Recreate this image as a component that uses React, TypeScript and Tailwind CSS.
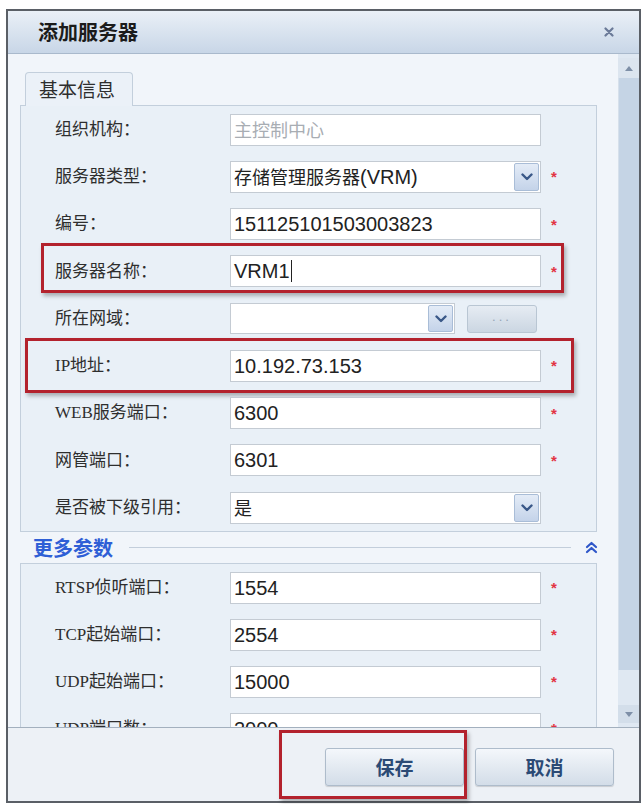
import React from "react";

const labelFont = "font-['Liberation_Serif','Noto_Sans_CJK_SC',serif]";
const valueFont = "font-['Liberation_Sans','Noto_Sans_CJK_SC',sans-serif]";
const cjkFont = "font-['Noto_Sans_CJK_SC',sans-serif]";

function ChevronDown() {
  return (
    <svg width="12" height="8" viewBox="0 0 12 8">
      <path d="M1.5 1.5 L6 6 L10.5 1.5" stroke="#3a5888" strokeWidth="2.4" fill="none" strokeLinecap="round" strokeLinejoin="round" />
    </svg>
  );
}

function Star() {
  return (
    <span className="ml-[8px] w-[10px] text-center text-[15px] leading-none font-bold text-[#e23444] font-['Liberation_Sans',sans-serif]">
      *
    </span>
  );
}

function Row({ label, children, required, pitch = "h-[47.25px]" }: { label: React.ReactNode; children: React.ReactNode; required?: boolean; pitch?: string }) {
  return (
    <div className={`relative flex items-center ${pitch}`}>
      <div className={`w-[209px] pl-[34px] text-[17px] text-[#2e2e2e] ${labelFont}`}>{label}</div>
      {children}
      {required && <Star />}
    </div>
  );
}

function TextBox({ children, muted }: { children?: React.ReactNode; muted?: boolean }) {
  return (
    <div
      className={`flex h-[32px] w-[311px] items-center border border-[#c4cbd3] bg-white pl-[3px] text-[20px] ${valueFont} ${
        muted ? "text-[#a8adb3]" : "text-[#222]"
      }`}
    >
      {children}
    </div>
  );
}

function SelectBox({ children, width = "w-[311px]", height = "h-[32px]" }: { children?: React.ReactNode; width?: string; height?: string }) {
  return (
    <div className={`flex ${height} ${width} items-stretch border border-[#c4cbd3] bg-white`}>
      <div className={`flex flex-1 items-center pl-[3px] text-[20px] text-[#222] ${valueFont}`}>{children}</div>
      <div className="m-[1px] flex w-[25px] items-center justify-center rounded-[2px] border border-[#a9bdd7] bg-linear-to-b from-[#e4ecf7] to-[#c4d3e9]">
        <ChevronDown />
      </div>
    </div>
  );
}

function RedBox({ className }: { className: string }) {
  return (
    <div
      className={`pointer-events-none absolute border-[3px] border-[#b3222d] shadow-[2px_3px_4px_rgba(0,0,0,0.28)] ${className}`}
    />
  );
}

function FooterButton({ children }: { children: React.ReactNode }) {
  return (
    <button className="flex h-[38px] w-[139px] items-center justify-center rounded-[3px] border border-[#aebccb] bg-linear-to-b from-[#f4f7fb] to-[#d3dde8] text-[19px] font-bold text-[#2b4a75] font-['Noto_Sans_CJK_SC',serif] shadow-[0_1px_1px_rgba(0,0,0,0.15)]">
      {children}
    </button>
  );
}

export default function App() {
  return (
    <div className="h-[804px] w-[643px] bg-white pl-[6px] pt-[9px]">
      <div className="relative flex h-[794px] w-[635px] flex-col border-2 border-[#5a5f66] bg-[#f1f5fa]">
        {/* title bar */}
        <div className="flex h-[43px] shrink-0 items-center justify-between border-b border-[#a9b9cc] bg-linear-to-b from-[#eaf0f7] to-[#c8d6e7] pl-[30px] pr-[25px]">
          <span className={`text-[20px] font-bold text-[#1b1b1b] ${cjkFont}`}>添加服务器</span>
          <svg width="10" height="10" viewBox="0 0 10 10">
            <path d="M1.5 1.5 L8.5 8.5 M8.5 1.5 L1.5 8.5" stroke="#6b7a98" strokeWidth="2.2" strokeLinecap="round" />
          </svg>
        </div>

        {/* body */}
        <div className="flex h-[673px] shrink-0">
          <div className="flex-1 overflow-hidden pt-[18px]">
            <div className="relative z-10 -mb-px ml-[17px] flex h-[34px] w-[108px] items-center rounded-t-[4px] border border-b-0 border-[#c3cfdc] bg-[#ebf1f8] pl-[13px]">
              <span className={`text-[19px] text-[#2e2e2e] ${cjkFont}`}>基本信息</span>
            </div>
            <div className="ml-[12px] w-[577px] border border-[#c3cfdc] bg-[#e9f0f7]">
              <Row label="组织机构：">
                <TextBox muted>
                  <span className="text-[18px] font-['Noto_Sans_CJK_SC',sans-serif]">主控制中心</span>
                </TextBox>
              </Row>
              <Row label="服务器类型：" required>
                <SelectBox>
                  <span className="text-[18px] font-['Noto_Sans_CJK_SC',sans-serif]">存储管理服务器</span>
                  <span>(VRM)</span>
                </SelectBox>
              </Row>
              <Row label="编号：" required>
                <TextBox>151125101503003823</TextBox>
              </Row>
              <Row label="服务器名称：" required>
                <TextBox>
                  VRM1
                  <span className="ml-[1px] inline-block h-[22px] w-[1px] bg-[#222]" />
                </TextBox>
                <RedBox className="left-[20px] top-[-5px] h-[50px] w-[523px]" />
              </Row>
              <Row label="所在网域：">
                <SelectBox width="w-[225px]" height="h-[31px]" />
                <div className="ml-[12px] flex h-[28px] w-[70px] items-center justify-center rounded-[3px] border border-[#b9c6d3] bg-linear-to-b from-[#e6ecf3] to-[#cbd6e2] pb-[4px] text-[13px] tracking-[3px] text-[#95a4b6] font-['Liberation_Sans',sans-serif]">
                  ...
                </div>
              </Row>
              <Row label="IP地址：" required>
                <TextBox>10.192.73.153</TextBox>
                <RedBox className="left-[4px] top-[-4px] h-[55px] w-[549px]" />
              </Row>
              <Row label="WEB服务端口：" required>
                <TextBox>6300</TextBox>
              </Row>
              <Row label="网管端口：" required>
                <TextBox>6301</TextBox>
              </Row>
              <Row label="是否被下级引用：">
                <SelectBox>
                  <span className="text-[18px] font-['Noto_Sans_CJK_SC',sans-serif]">是</span>
                </SelectBox>
              </Row>
            </div>

            {/* collapsible section header */}
            <div className="flex h-[31px] items-center pl-[25px] pr-[20px]">
              <span className={`text-[20px] font-bold text-[#2f5fd6] ${cjkFont}`}>更多参数</span>
              <div className="ml-[16px] h-px flex-1 bg-[#c3cedb]" />
              <div className="ml-[14px] flex w-[13px] justify-center">
                <svg width="13" height="13" viewBox="0 0 13 13">
                  <path d="M2 6 L6.5 2 L11 6 M2 11 L6.5 7 L11 11" stroke="#2f57c9" strokeWidth="2.2" fill="none" strokeLinecap="round" strokeLinejoin="round" />
                </svg>
              </div>
            </div>

            <div className="ml-[12px] w-[577px] border border-[#c3cfdc] bg-[#e9f0f7]">
              <Row label="RTSP侦听端口：" required pitch="h-[47px]">
                <TextBox>1554</TextBox>
              </Row>
              <Row label="TCP起始端口：" required pitch="h-[47px]">
                <TextBox>2554</TextBox>
              </Row>
              <Row label="UDP起始端口：" required pitch="h-[47px]">
                <TextBox>15000</TextBox>
              </Row>
              <Row label="UDP端口数：" required pitch="h-[47px]">
                <TextBox>2000</TextBox>
              </Row>
            </div>
          </div>

          {/* scrollbar */}
          <div className="flex w-[21px] shrink-0 flex-col bg-[#dfe8f2] pt-[4px] pb-[4px]">
            <div className="flex h-[20px] items-center justify-center bg-[#dce5ef]">
              <svg width="8" height="5" viewBox="0 0 8 5">
                <path d="M0 5 L4 0 L8 5 Z" fill="#7e8fa7" />
              </svg>
            </div>
            <div className="h-[592px] border-l border-[#d6e0eb] bg-[#c5d4e5]" />
            <div className="flex-1" />
            <div className="flex h-[18px] items-center justify-center bg-[#d3deea]">
              <svg width="8" height="5" viewBox="0 0 8 5">
                <path d="M0 0 L4 5 L8 0 Z" fill="#7e8fa7" />
              </svg>
            </div>
          </div>
        </div>

        {/* footer */}
        <div className="relative flex flex-1 items-start justify-end gap-[11px] border-t border-[#a3b0be] bg-[#edf1f6] pr-[25px] pt-[20px]">
          <FooterButton>保存</FooterButton>
          <FooterButton>取消</FooterButton>
          <RedBox className="left-[271px] top-[2px] h-[69px] w-[188px]" />
        </div>
      </div>
    </div>
  );
}
